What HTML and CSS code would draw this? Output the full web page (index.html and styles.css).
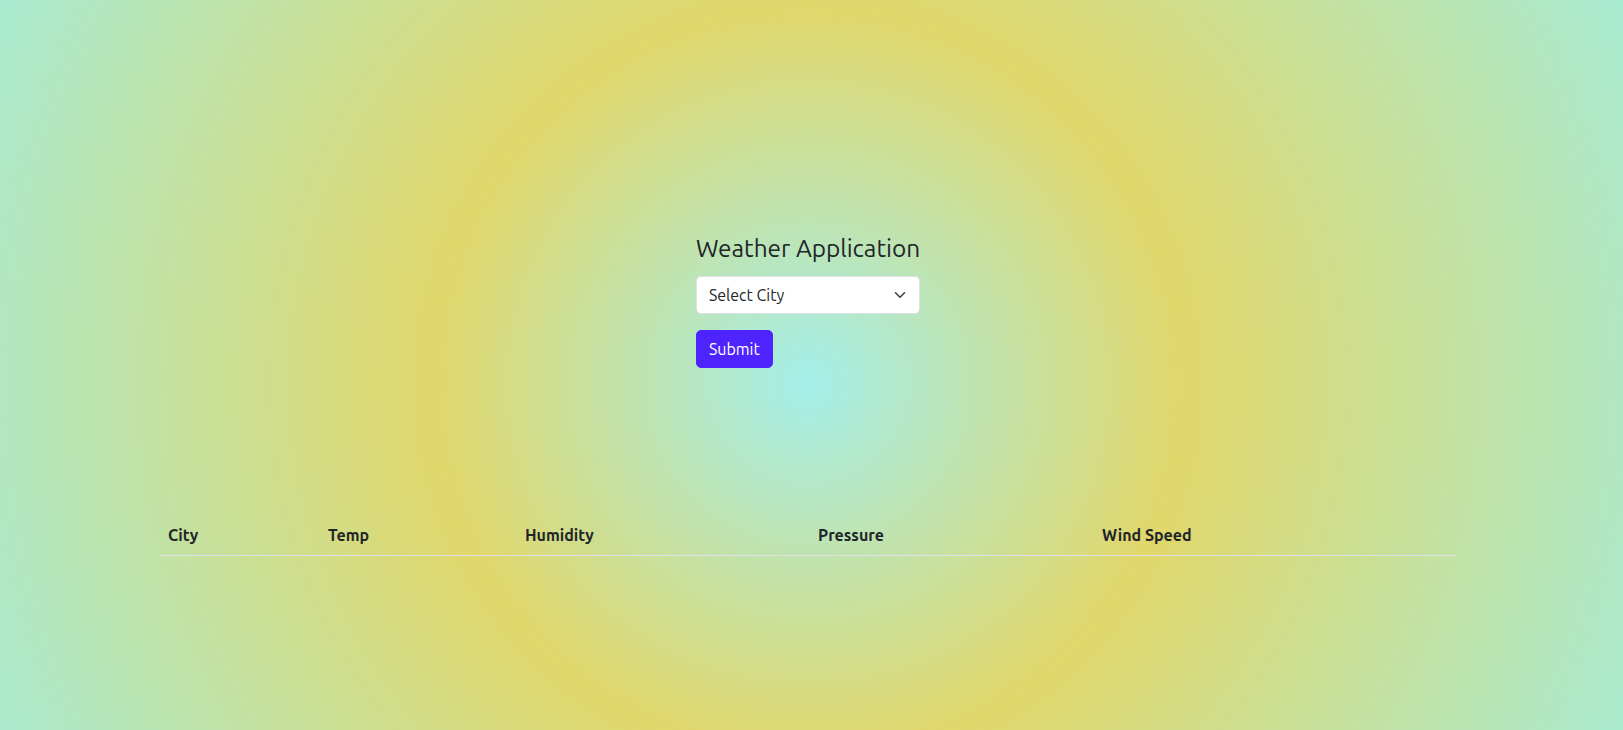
FILE: index.html
```html
<!DOCTYPE html>
<html lang="en">
<head>
<meta charset="utf-8">
<title>Weather Application</title>
<link rel="stylesheet" href="styles.css">
</head>
<body>
<div class="page">
  <section class="form-area">
    <form class="form-box">
      <h3 class="title">Weather Application</h3>
      <div class="select-wrap">
        <select class="form-select">
          <option>Select City</option>
          <option>London</option>
          <option>Paris</option>
          <option>New York</option>
        </select>
        <svg class="chevron" width="16" height="12" viewBox="0 0 16 16" aria-hidden="true">
          <path d="M2 5l6 6 6-6" fill="none" stroke="#343a40" stroke-width="2" stroke-linecap="round" stroke-linejoin="round"/>
        </svg>
      </div>
      <button type="button" class="btn">Submit</button>
    </form>
  </section>
  <section class="table-area">
    <table class="weather-table">
      <thead>
        <tr>
          <th class="c-city">City</th>
          <th class="c-temp">Temp</th>
          <th class="c-hum">Humidity</th>
          <th class="c-pres">Pressure</th>
          <th class="c-wind">Wind Speed</th>
        </tr>
      </thead>
      <tbody></tbody>
    </table>
  </section>
</div>
</body>
</html>
```

FILE: styles.css
```css
* { box-sizing: border-box; }

html, body {
  margin: 0;
  height: 100%;
}

body {
  font-family: "Ubuntu", "Open Sans", "Noto Sans", sans-serif;
  font-size: 16px;
  line-height: 1.5;
  color: #212529;
  background: radial-gradient(circle at 808px 383px,
    #a4eee9 0px,
    #e1d76b 375px,
    #a8ebd2 900px);
  background-attachment: fixed;
  overflow: hidden;
}

.page {
  width: 1616px;
  min-height: 730px;
}

.form-area {
  display: flex;
  justify-content: center;
  padding-top: 234px;
}

.form-box {
  display: flex;
  flex-direction: column;
  align-items: flex-start;
}

.title {
  margin: 0 0 13px 0;
  font-size: 24.4px;
  font-weight: 400;
  line-height: 1.2;
  white-space: nowrap;
}

.select-wrap {
  position: relative;
  align-self: stretch;
}

.form-select {
  display: block;
  width: 100%;
  height: 38px;
  padding: 6px 36px 6px 12px;
  font-family: inherit;
  font-size: 16px;
  color: #212529;
  background: #fff;
  border: 1px solid #dee2e6;
  border-radius: 5px;
  appearance: none;
  -webkit-appearance: none;
}

.chevron {
  position: absolute;
  right: 12px;
  top: 13px;
  width: 16px;
  height: 12px;
  pointer-events: none;
}

.btn {
  margin-top: 16px;
  height: 38px;
  padding: 6px 12px;
  font-family: inherit;
  font-size: 16px;
  line-height: 1.5;
  color: #fff;
  background: #4d24fd;
  border: 1px solid #4d24fd;
  border-radius: 5px;
}

.table-area {
  display: flex;
  justify-content: center;
  margin-top: 147px;
}

.weather-table {
  width: 1296px;
  border-collapse: collapse;
  table-layout: fixed;
}

.weather-table th {
  text-align: left;
  padding: 8px;
  font-size: 16px;
  font-weight: 700;
  line-height: 24px;
  border-bottom: 1px solid #dee2e6;
}

.c-city { width: 160px; }
.c-temp { width: 197px; }
.c-hum { width: 293px; }
.c-pres { width: 284px; }
.c-wind { width: 362px; }
```
